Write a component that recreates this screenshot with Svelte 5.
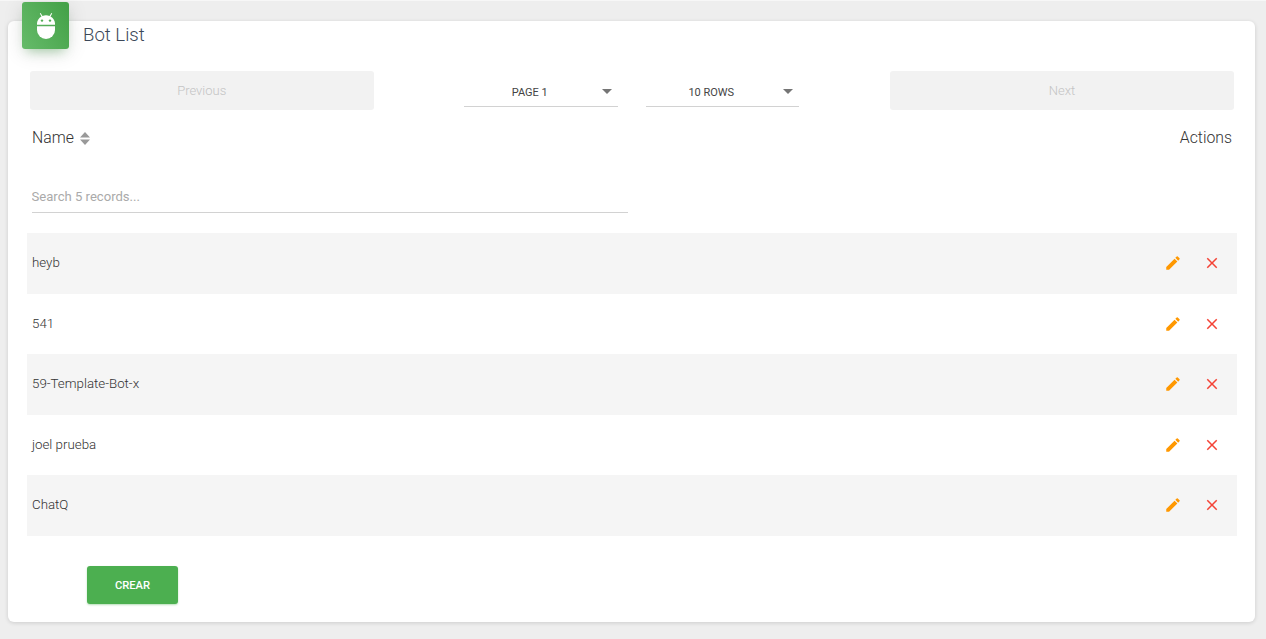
<script>
  const rows = ['heyb', '541', '59-Template-Bot-x', 'joel prueba', 'ChatQ'];
</script>

<div class="page">
  <section class="card">
    <div class="badge">
      <svg viewBox="0 0 18 26" width="18" height="26" fill="#fff" aria-hidden="true">
        <path d="M3.6 0 5.5 2.9A9 9 0 0 1 9 2.2a9 9 0 0 1 3.5.7L14.4 0l.8.5-1.7 2.9A9 9 0 0 1 18 11.8H0a9 9 0 0 1 4.5-8.4L2.8.5z"/>
        <path d="M0 13.2h18V17a9 9 0 0 1-18 0z"/>
        <circle cx="5" cy="7.6" r="1.2" fill="#55b059"/>
        <circle cx="13" cy="7.6" r="1.2" fill="#4fac53"/>
      </svg>
    </div>
    <h1>Bot List</h1>

    <div class="pager">
      <button class="nav" disabled>Previous</button>
      <div class="selects">
        <div class="select"><span>PAGE 1</span><i class="caret"></i></div>
        <div class="select rows-select"><span>10 ROWS</span><i class="caret"></i></div>
      </div>
      <button class="nav next" disabled>Next</button>
    </div>

    <div class="head">
      <div class="name-col">
        Name
        <svg viewBox="0 0 10 13" width="10" height="13" fill="#999" aria-hidden="true">
          <path d="M5 0 10 5.4H0zM0 7.6h10L5 13z"/>
        </svg>
      </div>
      <div>Actions</div>
    </div>

    <div class="search"><input placeholder="Search 5 records..." /></div>

    <div class="table">
      {#each rows as row}
        <div class="row">
          <span>{row}</span>
          <div class="actions">
            <svg viewBox="0 0 24 24" width="18" height="18" fill="#ff9800" aria-hidden="true">
              <path d="M3 17.25V21h3.75L17.81 9.94l-3.75-3.75zM20.71 7.04a1 1 0 0 0 0-1.41l-2.34-2.34a1 1 0 0 0-1.41 0l-1.83 1.83 3.75 3.75z"/>
            </svg>
            <svg viewBox="0 0 24 24" width="18" height="18" fill="#f44336" aria-hidden="true">
              <path d="M19 6.41 17.59 5 12 10.59 6.41 5 5 6.41 10.59 12 5 17.59 6.41 19 12 13.41 17.59 19 19 17.59 13.41 12z"/>
            </svg>
          </div>
        </div>
      {/each}
    </div>

    <button class="crear">CREAR</button>
  </section>
</div>

<style>
  :global(body) {
    margin: 0;
    background: #eee;
    font-family: Roboto, "Liberation Sans", sans-serif;
  }
  .page {
    padding: 20px 11px 17px 8px;
    border-top: 1px solid #f7f7f7;
    height: 639px;
    box-sizing: border-box;
  }
  .card {
    position: relative;
    height: 601px;
    box-sizing: border-box;
    padding: 0 19px;
    background: #fff;
    border-radius: 6px;
    box-shadow: 0 1px 4px rgba(0, 0, 0, 0.14);
  }
  .badge {
    position: absolute;
    left: 14px;
    top: -19px;
    width: 47px;
    height: 47px;
    display: flex;
    align-items: center;
    justify-content: center;
    border-radius: 3px;
    background: linear-gradient(60deg, #66bb6a, #43a047);
    box-shadow: 0 4px 20px rgba(0, 0, 0, 0.12), 0 7px 10px -5px rgba(76, 175, 80, 0.4);
  }
  h1 {
    margin: 0;
    padding: 1px 0 0 56px;
    height: 50px;
    box-sizing: border-box;
    font-size: 18.6px;
    line-height: 27px;
    font-weight: 300;
    color: #3c4858;
  }
  .pager {
    display: flex;
    justify-content: space-between;
    align-items: flex-start;
    padding: 0 2px 0 3px;
    height: 39px;
  }
  .nav {
    width: 343.5px;
    height: 39px;
    border: 0;
    border-radius: 3px;
    background: #f2f2f2;
    color: #c4c4c4;
    font: 300 13px Roboto, sans-serif;
    padding: 0 0 1px;
  }
  .next {
    width: 344px;
  }
  .selects {
    display: flex;
    gap: 28px;
    height: 36px;
    margin-left: -1px;
  }
  .select {
    position: relative;
    width: 154px;
    height: 36px;
    box-sizing: border-box;
    border-bottom: 1px solid #d2d2d2;
    font-size: 11px;
    line-height: 44px;
    color: #444;
    text-align: center;
  }
  .rows-select {
    width: 153px;
  }
  .select span {
    display: block;
    padding-right: 22px;
  }
  .caret {
    position: absolute;
    right: 6px;
    top: 18px;
    border: 5px solid transparent;
    border-top-color: #757575;
    border-bottom: 0;
  }
  .head {
    display: flex;
    justify-content: space-between;
    padding: 0 4px 0 5px;
    margin-top: 18px;
    height: 20px;
    font-size: 15.8px;
    line-height: 20px;
    font-weight: 300;
    color: #333;
  }
  .name-col {
    display: flex;
    align-items: center;
    gap: 6px;
  }
  .search {
    width: 596px;
    margin: 29px 0 0 4.5px;
    border-bottom: 1px solid #d2d2d2;
  }
  .search input {
    display: block;
    width: 100%;
    height: 35px;
    padding: 3px 0 0;
    box-sizing: border-box;
    border: 0;
    outline: 0;
    background: transparent;
    font: 400 13.1px Roboto, sans-serif;
  }
  .search input::placeholder {
    color: #aaa;
    opacity: 1;
  }
  .table {
    margin-top: 20px;
    width: 1210px;
  }
  .row {
    display: flex;
    justify-content: space-between;
    align-items: center;
    height: 60.5px;
    padding: 0 16px 0.5px 5px;
    box-sizing: border-box;
    font-size: 13.3px;
    font-weight: 300;
    color: #333;
  }
  .row > span {
    margin-top: -0.3px;
  }
  .row:nth-child(odd) {
    background: #f5f5f5;
  }
  .actions {
    display: flex;
    gap: 21px;
  }
  .crear {
    display: block;
    margin: 30px 0 0 60px;
    width: 91px;
    height: 38px;
    border: 0;
    border-radius: 3px;
    background: #4caf50;
    color: #fff;
    font: 500 11.2px Roboto, sans-serif;
    box-shadow: 0 1px 2px rgba(76, 175, 80, 0.4);
    padding: 1px 0 0;
  }
</style>
